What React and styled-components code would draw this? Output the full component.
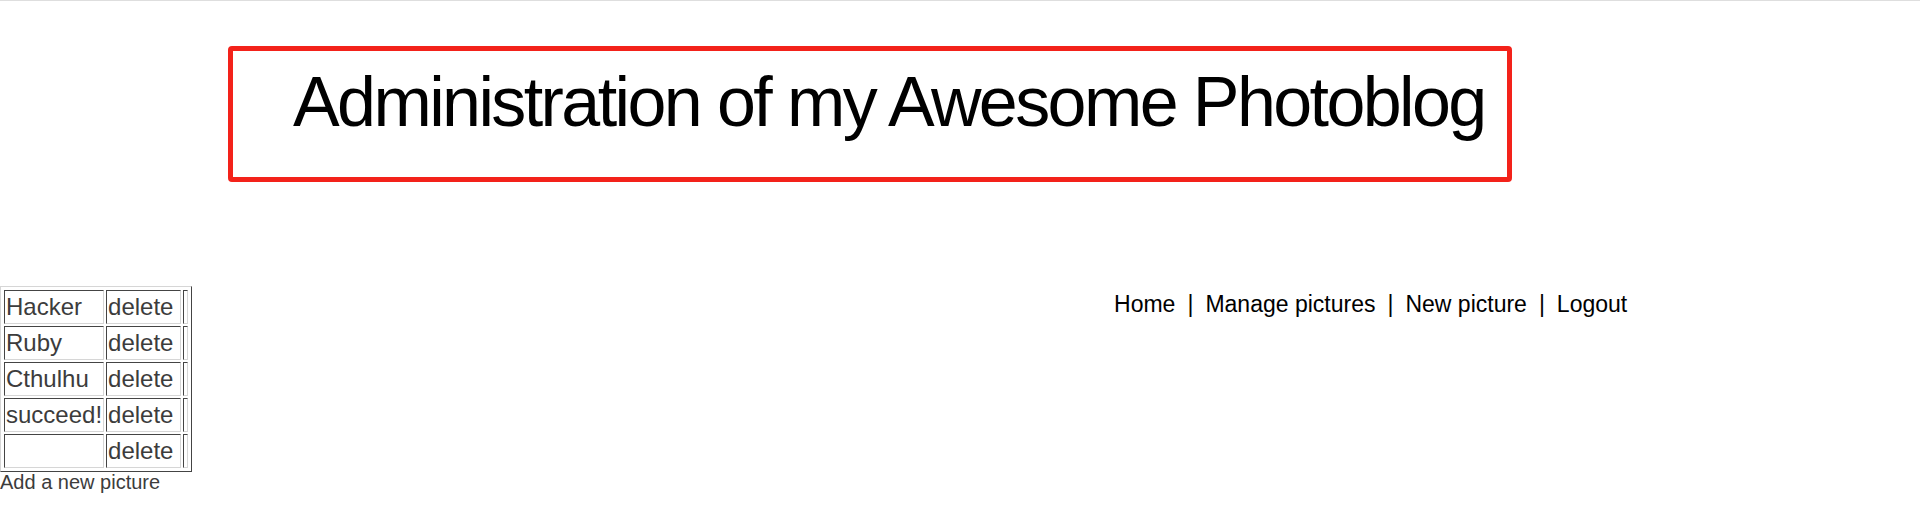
import React from 'react';
import styled, { createGlobalStyle } from 'styled-components';

const GlobalStyle = createGlobalStyle`
  html, body {
    margin: 0;
    padding: 0;
    background: #ffffff;
  }
  body {
    font-family: "Liberation Sans", Arial, sans-serif;
  }
`;

const Page = styled.div`
  border-top: 1px solid #dedede;
  min-height: 505px;
`;

const TitleBox = styled.header`
  box-sizing: border-box;
  width: 1284px;
  height: 136px;
  margin: 45px 0 0 228px;
  padding: 11px 0 0 60px;
  border: 5px solid #f3221a;
  border-radius: 4px;
`;

const Title = styled.h1`
  margin: 0;
  font-size: 70px;
  font-weight: normal;
  line-height: 80px;
  letter-spacing: -2.6px;
  color: #000000;
  white-space: nowrap;
`;

const Main = styled.main`
  display: flex;
  align-items: flex-start;
  margin-top: 104px;
`;

const Side = styled.section`
  display: flex;
  flex-direction: column;
  align-items: flex-start;
`;

const PictureTable = styled.table`
  border-collapse: separate;
  border-spacing: 2px;
  padding: 1px;
  border: 1px solid;
  border-color: #d6d6d6 #444444 #444444 #d6d6d6;
`;

const Cell = styled.td`
  box-sizing: content-box;
  width: ${(p) => p.$w}px;
  min-width: ${(p) => p.$w}px;
  padding: 1px;
  border: 1px solid;
  border-color: #444444 #d6d6d6 #d6d6d6 #444444;
  font-size: 24px;
  line-height: 30px;
  height: 30px;
  color: #3c3c3c;
  white-space: nowrap;
  overflow: hidden;
`;

const AddLink = styled.div`
  font-size: 20px;
  line-height: 21px;
  color: #3c3c3c;
`;

const Nav = styled.nav`
  display: flex;
  align-items: center;
  margin: 5px 0 0 922px;
  font-size: 23px;
  line-height: 26px;
  color: #000000;
  white-space: nowrap;
`;

const NavItem = styled.span`
  color: #000000;
`;

const Sep = styled.span`
  margin: 0 12px;
`;

const pictures = ['Hacker', 'Ruby', 'Cthulhu', 'succeed!', ''];
const links = ['Home', 'Manage pictures', 'New picture', 'Logout'];

const App = () => {
  return (
    <Page>
      <GlobalStyle />
      <TitleBox>
        <Title>Administration of my Awesome Photoblog</Title>
      </TitleBox>
      <Main>
        <Side>
          <PictureTable>
            <tbody>
              {pictures.map((name, i) => (
                <tr key={i}>
                  <Cell $w={96}>{name}</Cell>
                  <Cell $w={71}>delete</Cell>
                  <Cell $w={1}></Cell>
                </tr>
              ))}
            </tbody>
          </PictureTable>
          <AddLink>Add a new picture</AddLink>
        </Side>
        <Nav>
          {links.map((label, i) => (
            <React.Fragment key={label}>
              {i > 0 && <Sep>|</Sep>}
              <NavItem>{label}</NavItem>
            </React.Fragment>
          ))}
        </Nav>
      </Main>
    </Page>
  );
};

export default App;
